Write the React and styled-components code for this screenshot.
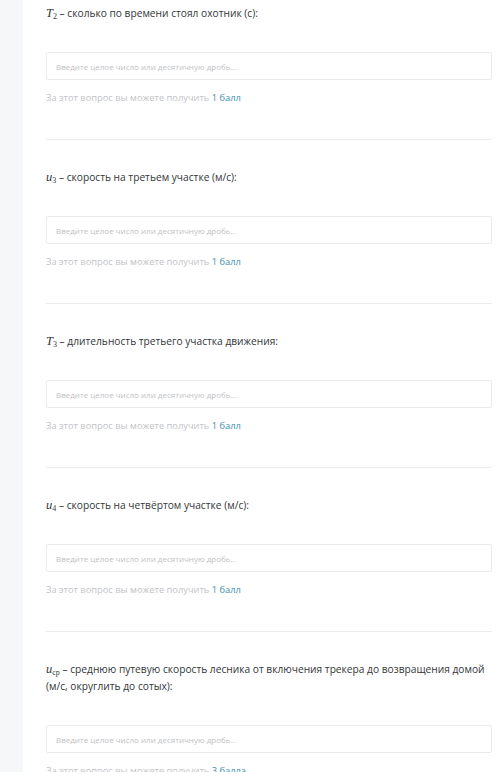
import React from "react";
import styled, { createGlobalStyle } from "styled-components";

const GlobalStyle = createGlobalStyle`
  html, body {
    margin: 0;
    padding: 0;
    background: #ffffff;
  }
  body {
    font-family: "Open Sans", "Liberation Sans", sans-serif;
  }
`;

const questions = [
  { sym: "T", sub: "2", text: "сколько по времени стоял охотник (с):", points: "1 балл" },
  { sym: "u", sub: "3", text: "скорость на третьем участке (м/с):", points: "1 балл" },
  { sym: "T", sub: "3", text: "длительность третьего участка движения:", points: "1 балл" },
  { sym: "u", sub: "4", text: "скорость на четвёртом участке (м/с):", points: "1 балл" },
  {
    sym: "u",
    sub: "ср",
    text: "среднюю путевую скорость лесника от включения трекера до возвращения домой (м/с, округлить до сотых):",
    points: "3 балла",
  },
];

const App = () => {
  return (
    <>
      <GlobalStyle />
      <Page>
        <Sidebar />
        <Content>
          {questions.map((q, i) => (
            <Question key={i} $last={i === questions.length - 1}>
              <Title>
                <MathSym>
                  {q.sym}
                  <sub>{q.sub}</sub>
                </MathSym>{" "}
                – {q.text}
              </Title>
              <Field placeholder="Введите целое число или десятичную дробь..." />
              <Points>
                За этот вопрос вы можете получить <b>{q.points}</b>
              </Points>
            </Question>
          ))}
        </Content>
      </Page>
    </>
  );
};

const Page = styled.div`
  display: flex;
  height: 772px;
  overflow: hidden;
`;

const Sidebar = styled.aside`
  width: 23px;
  flex-shrink: 0;
  background: #f5f7f9;
`;

const Content = styled.main`
  flex: 1;
  padding: 5px 8px 0 23px;
`;

const Question = styled.section`
  padding-bottom: 34px;
  margin-bottom: 29px;
  border-bottom: ${(p) => (p.$last ? "none" : "1px solid #ececec")};
`;

const Title = styled.div`
  font-size: 10.2px;
  line-height: 17px;
  color: #333638;
  margin-bottom: 30px;
`;

const MathSym = styled.span`
  font-family: "Liberation Serif", "DejaVu Serif", serif;
  font-style: italic;
  font-size: 12.5px;

  sub {
    font-size: 8px;
    font-style: normal;
    vertical-align: -2px;
    line-height: 0;
  }
`;

const Field = styled.input`
  display: block;
  box-sizing: border-box;
  width: 100%;
  height: 28px;
  padding: 0 9px;
  border: 1px solid #ebebeb;
  border-radius: 2px;
  background: #fff;
  font-family: "Open Sans", "Liberation Sans", sans-serif;
  font-size: 8px;
  color: #333;
  outline: none;

  &::placeholder {
    color: #c0c2c4;
  }
`;

const Points = styled.div`
  margin-top: 11px;
  font-size: 9.3px;
  line-height: 14px;
  color: #bfc3c7;

  b {
    font-weight: 400;
    color: #3d8fb0;
  }
`;

export default App;
